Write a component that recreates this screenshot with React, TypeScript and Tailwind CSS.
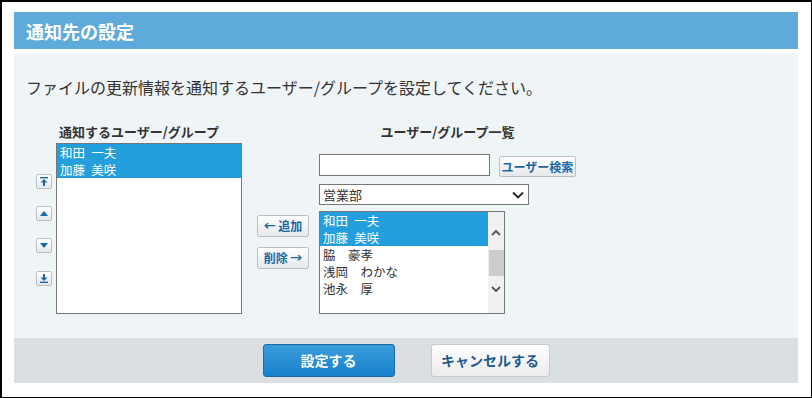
import React from "react";

const FONT = "font-['Meiryo','Noto_Sans_CJK_JP','Noto_Sans',sans-serif]";

const SMALL_BTN =
  "flex items-center justify-center rounded-[2px] border border-[#b9c1c6] bg-gradient-to-b from-white to-[#e6e8ea] text-[12px] font-bold text-[#1a69a6] leading-none";

function ArrowIcon({ kind }: { kind: "top" | "up" | "down" | "bottom" }) {
  return (
    <svg width="8" height="9" viewBox="0 0 8 9" fill="#1a69a6">
      {kind === "top" && (
        <>
          <rect x="0" y="0" width="8" height="1.4" />
          <path d="M4 2 L7.5 5.5 L5 5.5 L5 9 L3 9 L3 5.5 L0.5 5.5 Z" />
        </>
      )}
      {kind === "up" && <path d="M4 2 L8 7 L0 7 Z" />}
      {kind === "down" && <path d="M0 2 L8 2 L4 7 Z" />}
      {kind === "bottom" && (
        <>
          <path d="M3 0 L5 0 L5 3.5 L7.5 3.5 L4 7 L0.5 3.5 L3 3.5 Z" />
          <rect x="0" y="7.6" width="8" height="1.4" />
        </>
      )}
    </svg>
  );
}

function Row({ label, selected }: { label: string; selected?: boolean }) {
  return (
    <div
      className={`h-[17px] px-[3px] text-[12.5px] leading-[17px] whitespace-nowrap overflow-hidden ${
        selected ? "bg-[#229fdc] text-white" : "text-[#333]"
      }`}
    >
      {label}
    </div>
  );
}

export default function App() {
  const candidates = [
    { name: "和田\u2002一夫", selected: true },
    { name: "加藤\u2002美咲", selected: true },
    { name: "脇\u3000豪孝" },
    { name: "浅岡\u3000わかな" },
    { name: "池永\u3000厚" },
  ];

  return (
    <div
      className={`${FONT} box-border w-[812px] h-[398px] border-t-2 border-l-2 border-r border-b border-black bg-white pl-[12px] pt-[10px] pr-[12px] text-[#333]`}
    >
      <div className="w-[784px] h-[37px] bg-[#5eabdb] flex items-center px-[12px]">
        <h1 className="text-[18px] font-bold text-white leading-none">通知先の設定</h1>
      </div>

      <div className="mt-[4px] w-[784px] h-[285px] bg-[#eff4f7] flex flex-col pl-[12px]">
        <p className="mt-[23px] text-[16px] leading-[22px] text-[#333]">
          ファイルの更新情報を通知するユーザー/グループを設定してください。
        </p>

        <div className="mt-[26px] ml-[10px] flex items-start">
          {/* selected users */}
          <div className="w-[206px] flex flex-col">
            <div className="text-center text-[13px] font-bold leading-[16px] text-[#333]">
              通知するユーザー/グループ
            </div>
            <div className="mt-[3px] flex gap-[4px]">
              <div className="w-[16px] flex flex-col">
                <button className={`${SMALL_BTN} mt-[31px] w-[16px] h-[15px]`}>
                  <ArrowIcon kind="top" />
                </button>
                <button className={`${SMALL_BTN} mt-[17px] w-[16px] h-[15px]`}>
                  <ArrowIcon kind="up" />
                </button>
                <button className={`${SMALL_BTN} mt-[17px] w-[16px] h-[15px]`}>
                  <ArrowIcon kind="down" />
                </button>
                <button className={`${SMALL_BTN} mt-[18px] w-[16px] h-[15px]`}>
                  <ArrowIcon kind="bottom" />
                </button>
              </div>
              <div className="w-[186px] h-[171px] border border-[#767676] bg-white">
                <Row label={"和田\u2002一夫"} selected />
                <Row label={"加藤\u2002美咲"} selected />
              </div>
            </div>
          </div>

          {/* add / remove */}
          <div className="ml-[15px] mt-[91px] flex flex-col gap-[10px]">
            <button className={`${SMALL_BTN} w-[52px] h-[22px]`}>← 追加</button>
            <button className={`${SMALL_BTN} w-[52px] h-[22px]`}>削除 →</button>
          </div>

          {/* candidates */}
          <div className="ml-[10px] w-[257px] flex flex-col">
            <div className="text-center text-[13px] font-bold leading-[16px] text-[#333]">
              ユーザー/グループ一覧
            </div>
            <div className="mt-[14px] flex items-start">
              <input
                type="text"
                className="w-[171px] h-[22px] border border-[#767676] bg-white outline-none"
              />
              <button className={`${SMALL_BTN} ml-[9px] mt-[2px] w-[77px] h-[21px]`}>
                ユーザー検索
              </button>
            </div>
            <div className="mt-[7px] w-[210px] h-[21px] border border-[#767676] bg-white flex items-center justify-between pl-[3px] pr-[4px]">
              <span className="text-[13px] leading-none text-[#333]">営業部</span>
              <svg width="12" height="8" viewBox="0 0 12 8" fill="none" stroke="#222" strokeWidth="1.8">
                <path d="M1 1.5 L6 6.5 L11 1.5" />
              </svg>
            </div>
            <div className="mt-[6px] w-[186px] h-[103px] border border-[#767676] bg-white flex">
              <div className="flex-1 min-w-0">
                {candidates.map((c) => (
                  <Row key={c.name} label={c.name} selected={c.selected} />
                ))}
              </div>
              <div className="w-[16px] bg-[#f0f0f0] flex flex-col items-center">
                <svg className="mt-[17px]" width="10" height="7" viewBox="0 0 10 7" fill="none" stroke="#555" strokeWidth="1.8">
                  <path d="M1 6 L5 2 L9 6" />
                </svg>
                <div className="mt-[14px] w-[15px] h-[26px] bg-[#cdcdcd]" />
                <svg className="mt-[10px]" width="10" height="7" viewBox="0 0 10 7" fill="none" stroke="#555" strokeWidth="1.8">
                  <path d="M1 1 L5 5 L9 1" />
                </svg>
              </div>
            </div>
          </div>
        </div>
      </div>

      <div className="w-[784px] h-[45px] bg-[#dadfe2] flex items-center justify-center gap-[36px]">
        <button className="w-[132px] h-[33px] rounded-[3px] border border-[#1b6aa6] bg-gradient-to-b from-[#3a9ddb] to-[#1580cc] text-[14px] font-bold text-white">
          設定する
        </button>
        <button className="w-[119px] h-[33px] rounded-[3px] border border-[#c3cbd0] bg-gradient-to-b from-white to-[#ebebeb] text-[14px] font-bold text-[#1d5a8f]">
          キャンセルする
        </button>
      </div>
    </div>
  );
}
